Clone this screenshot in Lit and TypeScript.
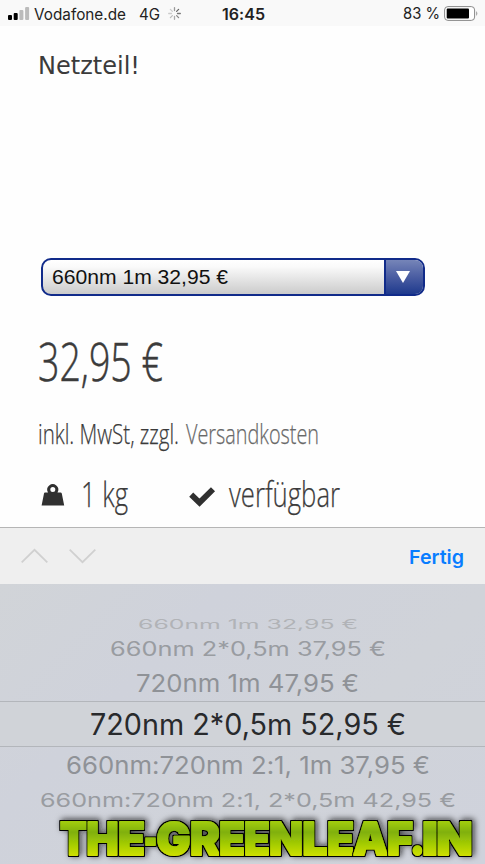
import { LitElement, html, svg, css } from "lit";
import { customElement, property } from "lit/decorators.js";

/** One line of real text, condensed or widened to a given width. */
@customElement("fit-text")
class FitText extends LitElement {
  @property() text = "";
  @property({ type: Number }) width = 100;
  @property({ type: Number }) size = 16;
  static styles = css`
    :host { display: block; flex: none; }
    svg { display: block; overflow: visible; fill: currentColor; stroke: currentColor; stroke-width: var(--ink, 0); }
  `;
  render() {
    const h = this.size;
    return html`<svg width=${this.width} height=${h}>
      <text x="0" y=${h} font-size=${this.size} textLength=${this.width} lengthAdjust="spacingAndGlyphs">${this.text}</text>
    </svg>`;
  }
}

const wheel = [
  { text: "660nm 1m 32,95 €", width: 220, size: 12.8, cls: "far" },
  { text: "660nm 2*0,5m 37,95 €", width: 276, size: 19.5, cls: "mid" },
  { text: "720nm 1m 47,95 €", width: 223, size: 24.3, cls: "near" },
  { text: "720nm 2*0,5m 52,95 €", width: 316, size: 29.3, cls: "picked" },
  { text: "660nm:720nm 2:1, 1m 37,95 €", width: 364, size: 24.2, cls: "near" },
  { text: "660nm:720nm 2:1, 2*0,5m 42,95 €", width: 416, size: 19.3, cls: "mid" },
];

// letter, left edge, advance width
const brand: [string, number, number][] = [
  ["T", 60, 27], ["H", 86.5, 32], ["E", 118, 27], ["-", 144, 13], ["G", 156.5, 34], ["R", 190, 30],
  ["E", 219, 26], ["E", 244, 26], ["N", 269, 34], ["L", 302.5, 25], ["E", 327, 27], ["A", 353, 35],
  ["F", 387, 26], [".", 410, 15], ["I", 422, 16], ["N", 436.5, 36],
];

@customElement("app-root")
class AppRoot extends LitElement {
  static styles = css`
    * { box-sizing: border-box; }
    :host { display: flex; flex-direction: column; width: 485px; height: 864px; overflow: hidden;
      position: relative; background: #fefefe; color: #3b3b3b; font-family: Inter, sans-serif;
      font-feature-settings: "calt" 0; }
    svg { display: block; flex: none; overflow: visible; }
    .status { height: 26px; background: #f9f9f9; color: #222; display: grid; grid-template-columns: 1fr auto 1fr;
      align-items: center; padding: 1px 7px 0 8px; }
    .side { display: flex; align-items: center; }
    .side.right { justify-content: flex-end; }
    .status fit-text { margin-top: -4px; }
    .carrier { margin-left: 5px; }
    .net { margin: 0 8px 0 13px; }
    .clock { font-weight: 600; padding-left: 1px; }
    .pct { margin-right: 4px; }
    .shop { height: 501px; padding-left: 38px; display: flex; flex-direction: column; }
    .title { margin-top: 23px; font-family: "DejaVu Sans", sans-serif; }
    .select { margin: 184px 0 0 3px; width: 384px; height: 38px; border: 2px solid #112b8a; border-radius: 10px;
      display: flex; overflow: hidden; background: linear-gradient(#fff, #fafafa 20%, #cbcbcb); color: #111; flex: none; }
    .value { flex: 1; padding: 4px 0 0 9px; font-family: "Liberation Sans", sans-serif; }
    .drop { width: 39px; border-left: 2px solid #112b8a; background: linear-gradient(#7685b8, #4a5da2 50%, #1f3a8d);
      display: flex; justify-content: center; padding: 11px 3px 0 0; }
    .cond { font-family: "Open Sans", sans-serif; font-weight: 300; --ink: .5px; }
    .price { margin-top: 31px; }
    .tax { display: flex; margin-top: 35px; --ink: .25px; }
    .soft { color: #686868; margin-left: 7px; }
    .facts { display: flex; margin-top: 28px; --ink: .25px; }
    .facts svg.ic { margin-top: 11px; }
    .bar { height: 57px; border-top: 1px solid #b5b5b5; background: #efefef; display: flex; align-items: center;
      padding: 0 21px; gap: 21px; }
    .bar svg { margin-top: -1px; }
    .done { margin: -4px 0 0 auto; color: #087dff; font-weight: 600; }
    .wheel { height: 280px; background: linear-gradient(135deg, #d1d4d8, #cfd2db 30%, #d0d3d9 65%, #cfd2dc);
      display: flex; flex-direction: column; align-items: center; padding-left: 10px; }
    .band { align-self: stretch; margin-left: -10px; height: 46px; margin-top: 8.7px; border: solid #b3b6bb; border-width: 1px 0;
      display: flex; justify-content: center; padding: 3.7px 0 0 10px; background: #d0d3d8; }
    .far { color: #b1b3b7; }
    .mid { color: #999ca1; }
    .near { color: #8f9297; }
    .picked { color: #282a2c; }
    .brand { position: absolute; left: 0; top: 808px; font-family: Inter, sans-serif; font-weight: 900; }
  `;

  row(i: number, gap: number) {
    const r = wheel[i];
    return html`<fit-text class=${r.cls} style="margin-top:${gap}px" .text=${r.text} .width=${r.width} .size=${r.size}></fit-text>`;
  }

  render() {
    const letters = brand.map(([c, x, w]) => svg`<text x=${x} y="47" textLength=${w} lengthAdjust="spacingAndGlyphs" filter="url(#edge)">${c}</text>`);
    return html`
      <div class="status">
        <div class="side">
          <svg width="21" height="14" viewBox="0 0 21 14">
            <rect y="8" width="4" height="5" rx="1"/><rect x="5.7" y="6" width="4" height="7" rx="1"/>
            <rect x="11.4" y="3" width="4" height="10" rx="1" fill="#bbb"/><rect x="17.1" y="0" width="4" height="13" rx="1" fill="#bbb"/>
          </svg>
          <fit-text class="carrier" .text=${"Vodafone.de"} .width=${92} .size=${15.5}></fit-text>
          <fit-text class="net" .text=${"4G"} .width=${21} .size=${15.5}></fit-text>
          <svg width="13" height="13" viewBox="-6.5 -6.5 13 13" stroke-width="1.3" stroke-linecap="round">
            ${[0, 1, 2, 3, 4, 5, 6, 7].map((n) => svg`<path d="M0-3V-5.8" transform="rotate(${n * 45})" stroke=${["#999", "#666", "#777", "#888", "#aaa", "#bbb", "#ccc", "#ccc"][n]}/>`)}
          </svg>
        </div>
        <fit-text class="clock" .text=${"16:45"} .width=${43} .size=${15.5}></fit-text>
        <div class="side right">
          <fit-text class="pct" .text=${"83 %"} .width=${37} .size=${15.3}></fit-text>
          <svg width="34" height="15" viewBox="0 0 34 15">
            <rect x=".6" y=".6" width="30" height="13.8" rx="3.3" fill="#fff" stroke="#888"/>
            <rect x="2.7" y="2.6" width="22.3" height="9.8" rx="1"/><path d="M32.3 5q2 2.4 0 5z" fill="#888"/>
          </svg>
        </div>
      </div>
      <div class="shop">
        <fit-text class="title" .text=${"Netzteil!"} .width=${102} .size=${24.5}></fit-text>
        <div class="select">
          <div class="value"><fit-text .text=${"660nm 1m 32,95 €"} .width=${176} .size=${20}></fit-text></div>
          <div class="drop"><svg width="14" height="12"><path d="M0 0H14L7 12Z" fill="#fff"/></svg></div>
        </div>
        <fit-text class="cond price" .text=${"32,95 €"} .width=${125} .size=${54}></fit-text>
        <div class="cond tax">
          <fit-text .text=${"inkl. MwSt, zzgl."} .width=${141} .size=${28}></fit-text>
          <fit-text class="soft" .text=${"Versandkosten"} .width=${133} .size=${28}></fit-text>
        </div>
        <div class="cond facts">
          <svg class="ic" width="30" height="24" viewBox="0 0 30 24" fill="#303030">
            <path fill-rule="evenodd" d="M7 9.5H10A5.5 5.5 0 1 1 19.5 9.5H22.5Q23.5 9.5 23.8 10.5L26.2 22.5H3.6L6 10.5Q6.2 9.5 7 9.5ZM14.8 3.9A2.5 2.5 0 1 0 14.8 8.9A2.5 2.5 0 1 0 14.8 3.9Z"/>
          </svg>
          <fit-text style="margin-left:13px" .text=${"1 kg"} .width=${47} .size=${34.5}></fit-text>
          <svg class="ic" style="margin-left:60px" width="28" height="24" viewBox="0 0 28 24">
            <path d="M3.2 11.7L11.5 19.6L25 6.2" fill="none" stroke="#303030" stroke-width="5.8"/>
          </svg>
          <fit-text style="margin-left:13px" .text=${"verfügbar"} .width=${111} .size=${34.5}></fit-text>
        </div>
      </div>
      <div class="bar">
        <svg width="27" height="14"><path d="M.7 13.3L13.5.8L26.3 13.3" fill="none" stroke="#d0d0d0" stroke-width="1.8"/></svg>
        <svg width="27" height="14"><path d="M.7.7L13.5 13.2L26.3.7" fill="none" stroke="#d0d0d0" stroke-width="1.8"/></svg>
        <fit-text class="done" .text=${"Fertig"} .width=${55} .size=${19}></fit-text>
      </div>
      <div class="wheel">
        ${this.row(0, 31.5)}${this.row(1, 7.7)}${this.row(2, 12.5)}
        <div class="band">${this.row(3, 0)}</div>
        ${this.row(4, 2.8)}${this.row(5, 13.8)}
      </div>
      <svg class="brand" width="485" height="56">
        <defs>
          <linearGradient id="lime" x1="0" y1="14" x2="0" y2="48" gradientUnits="userSpaceOnUse">
            <stop offset="0" stop-color="#a0cc10"/><stop offset=".3" stop-color="#80b00c"/><stop offset=".65" stop-color="#a4cc04"/><stop offset="1" stop-color="#cfe000"/>
          </linearGradient>
          <filter id="edge" filterUnits="userSpaceOnUse" x="50" y="0" width="435" height="56">
            <feMorphology in="SourceAlpha" operator="dilate" radius="1.2" result="fat"/>
            <feMerge><feMergeNode in="fat"/><feMergeNode in="SourceGraphic"/></feMerge>
          </filter>
          <filter id="soft" filterUnits="userSpaceOnUse" x="40" y="-6" width="445" height="62">
            <feDropShadow dx="2" dy="-1" stdDeviation="3" flood-color="#111" flood-opacity=".75"/>
          </filter>
        </defs>
        <g font-size="45" fill="url(#lime)" stroke="url(#lime)" stroke-width="1.8" stroke-linejoin="round" filter="url(#soft)">${letters}</g>
      </svg>`;
  }
}
